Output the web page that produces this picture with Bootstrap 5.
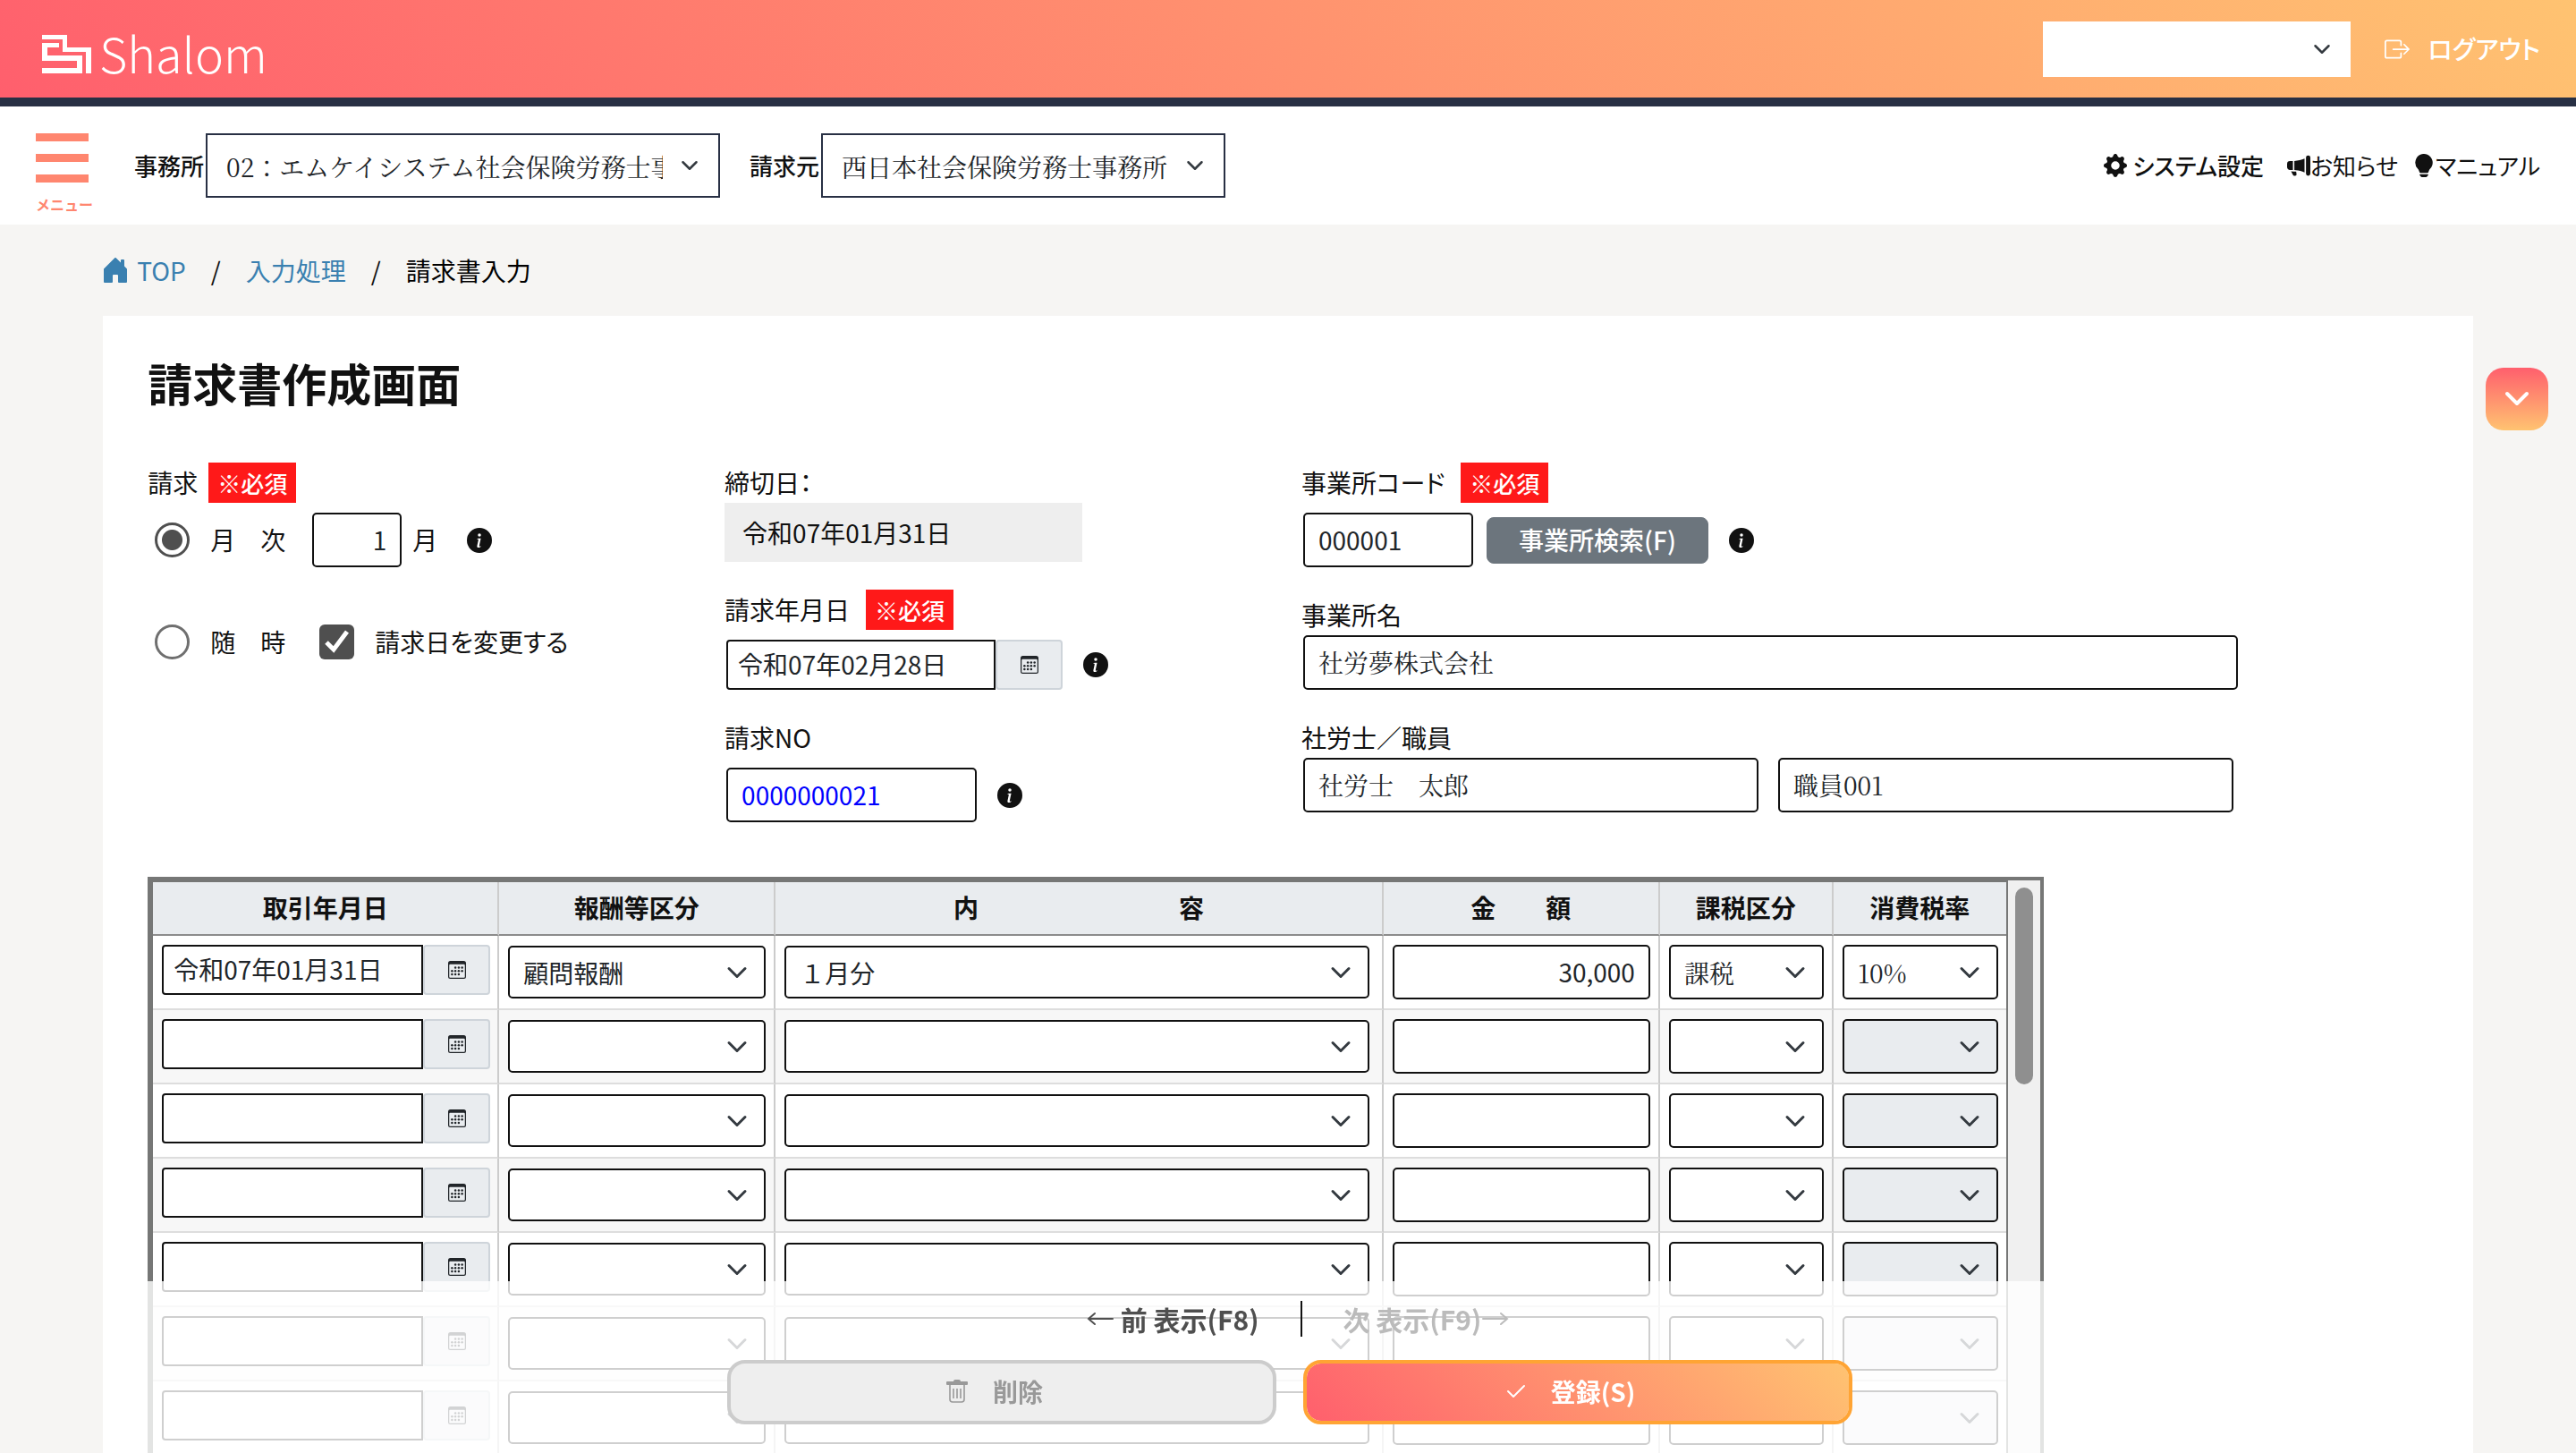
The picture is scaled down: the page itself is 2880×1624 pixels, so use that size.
<!DOCTYPE html>
<html lang="ja">
<head>
<meta charset="utf-8">
<meta name="viewport" content="width=device-width, initial-scale=1">
<title>請求書作成画面 | Shalom</title>
<link href="https://cdn.jsdelivr.net/npm/bootstrap@5.3.0/dist/css/bootstrap.min.css" rel="stylesheet">
<style>
  :root {
    --ink: #111;
    --navy: #283044;
    --coral: #ff866f;
    --chevron: url("data:image/svg+xml,%3csvg xmlns='http://www.w3.org/2000/svg' viewBox='0 0 16 16'%3e%3cpath fill='none' stroke='%23343a40' stroke-linecap='round' stroke-linejoin='round' stroke-width='2' d='m2 5 6 6 6-6'/%3e%3c/svg%3e");
    --tick: url("data:image/svg+xml,%3csvg xmlns='http://www.w3.org/2000/svg' viewBox='0 0 39 39'%3e%3cpath fill='none' stroke='%23fff' stroke-width='5' d='M8 20l8 8L31 8'/%3e%3c/svg%3e");
  }
  body {
    height: 100vh;
    overflow: hidden;
    background: #f6f5f3;
    color: var(--ink);
    font-family: "Noto Sans CJK JP", sans-serif;
    font-size: 28px;
    line-height: 45px;
    font-feature-settings: "palt";
  }
  svg { display: block; flex: none; fill: currentColor; }
  input, select, button { font-family: inherit; }
  .thin-text, .office-select { font-family: "Noto Serif CJK JP", "Noto Sans CJK JP", serif; font-weight: 400; }

  /* brand bar */
  .brand-bar {
    height: 119px;
    padding: 0 40px 0 47px;
    border-bottom: 10px solid var(--navy);
    background: linear-gradient(45deg, #ff5f6d, #ffc371) padding-box;
  }
  .brand-name { font-size: 54px; font-weight: 300; line-height: 80px; color: #fff; }
  .account-select { width: 344px; height: 62px; margin-right: 38px; border: 0; }
  .logout { color: #fff; font-size: 28px; font-weight: 500; gap: 20px; }

  /* office bar */
  .office-bar { height: 132px; padding: 30px 40px 0; }
  .menu-btn { gap: 14px; margin-right: 46px; color: var(--coral); font-size: 16px; font-weight: 700; line-height: 20px; }
  .menu-btn i { display: block; width: 59px; height: 9px; background: var(--coral); }
  .office-label { font-size: 26px; font-weight: 500; line-height: 72px; margin-right: 2px; }
  .office-select { height: 72px; padding: 2px 62px 0 21px; border: 2px solid var(--navy); }
  .office-select, .account-select {
    border-radius: 0; font-size: 28px; font-feature-settings: normal;
    background-size: 20px 20px; background-position: right 22px center;
  }
  .office-a { width: 575px; margin-right: 33px; }
  .office-b { width: 452px; }
  .util-link { font-size: 26px; line-height: 72px; color: var(--ink); text-decoration: none; }
  .util-link.main { gap: 6px; margin-right: 26px; font-weight: 500; }

  /* page */
  .page-area { padding: 0 4%; }
  .crumbs { --bs-breadcrumb-divider: "/"; --bs-breadcrumb-divider-color: #111; --bs-breadcrumb-item-padding-x: 28px; height: 102px; font-size: 28px; }
  .crumbs a { color: #3a80b0; text-decoration: none; gap: 10px; }
  .sheet { padding: 34px 50px 0; }
  .sheet-title { font-size: 50px; line-height: 80px; font-weight: 700; margin: 0 0 50px; }
  .g30 { --bs-gutter-x: 30px; }
  .field + .field { margin-top: 31px; }
  .field-head { height: 45px; gap: 12px; }
  .field-head.wide { gap: 18px; }
  .field-line { margin-top: 11px; padding-left: 2px; }
  .field-line.tight { margin-top: 0; gap: 22px; }
  .must { background: #ff1919; color: #fff; font-size: 26px; font-weight: 500; padding: 0 10px; }
  .box-input {
    height: 61px; padding: 0 15px 2px; border: 2px solid var(--ink); border-radius: 5px;
    font-size: 28px; color: #212529; background-color: #fff; font-feature-settings: normal;
  }
  .closing { width: 400px; height: 66px; padding-left: 20px; line-height: 66px; background: #eee; }
  .pick { width: 39px; height: 39px; margin: 0; border: 3px solid #6f6f6f; }
  .pick:checked { border-color: #4f4f4f; }
  .pick[type=radio]:checked {
    background-color: #fff;
    background-image: radial-gradient(circle, #4f4f4f 11px, transparent 12px);
  }
  .pick[type=checkbox] { margin-left: 38px; border: 0; border-radius: 6px; }
  .pick[type=checkbox]:checked { background-color: #4f4f4f; background-image: var(--tick); }
  .pick-line { height: 61px; }
  .pick-line + .pick-line { margin-top: 53px; }
  .pick-label { margin-left: 23px; }
  .w-month { width: 100px; margin: 0 12px 0 30px; }
  .w-date { width: 301px; }
  .w-number { width: 280px; }
  .w-code { width: 190px; }
  .w-name { width: 1045px; }
  .w-person { width: 509px; }
  .blue-text { color: #00f; }
  .info { width: 28px; height: 28px; margin-left: 23px; }
  .info.far { margin-left: 33px; }
  .date-box { height: 56px; padding: 0 11px 2px; border-radius: 4px 0 0 4px; }
  .cal-btn {
    width: 75px; height: 56px; flex: none; border: 2px solid #ced4da; border-radius: 4px;
    background: #e9ecef; color: #212529;
  }
  .search-btn { width: 248px; height: 52px; margin-left: 15px; padding: 0 0 2px; border-radius: 8px; font-size: 28px; font-weight: 500; line-height: 1; }

  /* detail lines */
  .grid-frame { margin-top: 61px; border: 4px solid #767776; }
  .grid-body { border: solid #767776; border-width: 2px 2px 0; }
  .lines { table-layout: fixed; border-collapse: separate; border-spacing: 0; }
  .lines th { height: 60px; padding: 0 0 2px; text-align: center; background: #e9ecef; border-right: 2px solid #ccc; border-bottom: 2px solid #8c8c8c; }
  .lines td { height: 83px; padding: 10px 9px 10px 10px; vertical-align: middle; border-right: 2px solid #ccc; border-bottom: 2px solid #ddd; }
  .lines tr > :last-child { border-right: 0; }
  .lines td.date-cell { vertical-align: top; padding-right: 8px; }
  .lines td.body-cell { padding-right: 14px; }
  .lines tbody tr:nth-child(even) { background: #f7f7f7; }
  .cell-select {
    height: 59px; padding: 0 50px 0 15px; border: 2px solid var(--ink); border-radius: 5px;
    font-size: 28px; color: #212529; background-color: #fff; font-feature-settings: normal;
    background-size: 24px 24px; background-position: right 18px center;
  }
  .cell-select.tall { height: 61px; }
  .form-select { --bs-form-select-bg-img: var(--chevron); background-image: var(--chevron); }
  .cell-select:disabled { background-color: #e9ecef; }
  .rail { width: 36px; padding: 8px; background: #f0f0f0; }
  .rail div { width: 20px; height: 220px; border-radius: 10px; background: #8f8f8f; }

  /* floating parts */
  .side-toggle {
    position: absolute; top: 411px; right: 31px; width: 70px; height: 70px;
    border: 0; border-radius: 20px; background: linear-gradient(#ff5f6d, #ffc371);
  }
  .action-bar { left: 4%; right: 4%; padding: 22px 50px 32px 54px; background: rgba(255, 255, 255, .8); }
  .pager { gap: 46px; padding-left: 18px; margin-bottom: 26px; font-size: 30px; line-height: 40px; font-weight: 700; }
  .pager a { color: #4f4f4f; text-decoration: none; gap: 8px; }
  .pager a.off { color: #bbb; gap: 1px; }
  .pager hr { width: 2px; height: 40px; margin: 0; border: 0; background: var(--ink); opacity: 1; }
  .act { width: 100%; height: 72px; gap: 28px; padding: 0 16px 2px 0; border: 4px solid #ccc; border-radius: 20px; background: #eee; color: #999; font-size: 28px; font-weight: 700; }
  .act.save { border-color: #ffa434; background: linear-gradient(45deg, #ff5f6d, #ffc371) padding-box; color: #fff; }
</style>
<script src="https://cdn.jsdelivr.net/npm/bootstrap@5.3.0/dist/js/bootstrap.bundle.min.js"></script>
</head>
<body>

<svg width="0" height="0" class="position-absolute" aria-hidden="true">
  <symbol id="i-info" viewBox="0 0 16 16"><path d="M8 16A8 8 0 1 0 8 0a8 8 0 0 0 0 16zm.93-9.412-1 4.705c-.07.34.029.533.304.533.194 0 .487-.07.686-.246l-.088.416c-.287.346-.92.598-1.465.598-.703 0-1.002-.422-.808-1.319l.738-3.468c.064-.293.006-.399-.287-.47l-.451-.081.082-.381 2.29-.287zM8 5.5a1 1 0 1 1 0-2 1 1 0 0 1 0 2z"/></symbol>
  <symbol id="i-cal" viewBox="0 0 16 16"><path d="M14 0H2a2 2 0 0 0-2 2v12a2 2 0 0 0 2 2h12a2 2 0 0 0 2-2V2a2 2 0 0 0-2-2zM1 3.857C1 3.384 1.448 3 2 3h12c.552 0 1 .384 1 .857v10.286c0 .473-.448.857-1 .857H2c-.552 0-1-.384-1-.857V3.857z"/><g><circle cx="6.5" cy="6" r="1"/><circle cx="9.5" cy="6" r="1"/><circle cx="12.5" cy="6" r="1"/><circle cx="3.5" cy="9" r="1"/><circle cx="6.5" cy="9" r="1"/><circle cx="9.5" cy="9" r="1"/><circle cx="12.5" cy="9" r="1"/><circle cx="3.5" cy="12" r="1"/><circle cx="6.5" cy="12" r="1"/><circle cx="9.5" cy="12" r="1"/></g></symbol>
</svg>

<header>
  <div class="brand-bar d-flex align-items-center">
    <a href="#" class="d-flex align-items-center text-decoration-none gap-2 pt-2" aria-label="Shalom">
      <svg width="56" height="43" viewBox="0 0 56 43" class="mt-1"><path fill="#fff" d="M0 0h28v14h27v29h-6V19H23V5H0zM0 9h19v5H6v9h39v20H0v-6h39v-8H0z"/></svg>
      <span class="brand-name">Shalom</span>
    </a>
    <select class="form-select account-select ms-auto" aria-label="アカウント"><option></option></select>
    <a href="#" class="logout d-flex align-items-center text-decoration-none">
      <svg width="28" height="28" viewBox="0 0 16 16"><path d="M10 12.5a.5.5 0 0 1-.5.5h-8a.5.5 0 0 1-.5-.5v-9a.5.5 0 0 1 .5-.5h8a.5.5 0 0 1 .5.5v2a.5.5 0 0 0 1 0v-2A1.5 1.5 0 0 0 9.5 2h-8A1.5 1.5 0 0 0 0 3.5v9A1.5 1.5 0 0 0 1.5 14h8a1.5 1.5 0 0 0 1.5-1.5v-2a.5.5 0 0 0-1 0v2z"/><path d="M15.854 8.354a.5.5 0 0 0 0-.708l-3-3a.5.5 0 0 0-.708.708L14.293 7.5H5.5a.5.5 0 0 0 0 1h8.793l-2.147 2.146a.5.5 0 0 0 .708.708l3-3z"/></svg>
      ログアウト
    </a>
  </div>

  <div class="office-bar d-flex align-items-start bg-white">
    <button type="button" class="menu-btn d-flex flex-column align-items-start border-0 bg-transparent p-0"><i></i><i></i><i></i><span>メニュー</span></button>
    <label class="office-label" for="office">事務所</label>
    <select id="office" class="form-select office-select office-a"><option>02：エムケイシステム社会保険労務士事務所</option></select>
    <label class="office-label" for="issuer">請求元</label>
    <select id="issuer" class="form-select office-select office-b"><option>西日本社会保険労務士事務所</option></select>
    <a href="#" class="util-link main d-flex align-items-center ms-auto"><svg width="26" height="26" viewBox="0 0 16 16"><path d="M9.405 1.05c-.413-1.4-2.397-1.4-2.81 0l-.1.34a1.464 1.464 0 0 1-2.105.872l-.31-.17c-1.283-.698-2.686.705-1.987 1.987l.169.311c.446.82.023 1.841-.872 2.105l-.34.1c-1.4.413-1.4 2.397 0 2.81l.34.1a1.464 1.464 0 0 1 .872 2.105l-.17.31c-.698 1.283.705 2.686 1.987 1.987l.311-.169a1.464 1.464 0 0 1 2.105.872l.1.34c.413 1.4 2.397 1.4 2.81 0l.1-.34a1.464 1.464 0 0 1 2.105-.872l.31.17c1.283.698 2.686-.705 1.987-1.987l-.169-.311a1.464 1.464 0 0 1 .872-2.105l.34-.1c1.4-.413 1.4-2.397 0-2.81l-.34-.1a1.464 1.464 0 0 1-.872-2.105l.17-.31c.698-1.283-.705-2.686-1.987-1.987l-.311.169a1.464 1.464 0 0 1-2.105-.872l-.1-.34zM8 10.93a2.929 2.929 0 1 1 0-5.86 2.929 2.929 0 0 1 0 5.858z"/></svg>システム設定</a>
    <a href="#" class="util-link d-flex align-items-center me-3"><svg width="26" height="26" viewBox="0 0 16 16"><path d="M13 2.5a1.5 1.5 0 0 1 3 0v11a1.5 1.5 0 0 1-3 0v-11zm-1 .724c-2.067.95-4.539 1.481-7 1.656v6.237a25.222 25.222 0 0 1 1.088.085c2.053.204 4.038.668 5.912 1.56V3.224zm-8 7.841V4.934c-.68.027-1.399.043-2.008.053A2.02 2.02 0 0 0 0 7v2c0 1.106.896 1.996 1.994 2.009a68.14 68.14 0 0 1 .496.008 64 64 0 0 1 1.51.048zm1.39 1.081c.285.021.569.047.85.078l.253 1.69a1 1 0 0 1-.983 1.187h-.548a1 1 0 0 1-.916-.599l-1.314-2.48a65.81 65.81 0 0 1 1.692.064c.327.017.65.037.966.06z"/></svg>お知らせ</a>
    <a href="#" class="util-link d-flex align-items-center"><svg width="26" height="26" viewBox="0 0 16 16"><path d="M2 6a6 6 0 1 1 10.174 4.31c-.203.196-.359.4-.453.619l-.762 1.769A.5.5 0 0 1 10.5 13h-5a.5.5 0 0 1-.46-.302l-.761-1.77a1.964 1.964 0 0 0-.453-.618A5.984 5.984 0 0 1 2 6zm3 8.5a.5.5 0 0 1 .5-.5h5a.5.5 0 0 1 0 1l-.224.447a1 1 0 0 1-.894.553H6.618a1 1 0 0 1-.894-.553L5.5 15a.5.5 0 0 1-.5-.5z"/></svg>マニュアル</a>
  </div>
</header>

<main class="page-area">
  <nav aria-label="breadcrumb">
    <ol class="breadcrumb crumbs align-items-center mb-0">
      <li class="breadcrumb-item"><a href="#" class="d-flex align-items-center"><svg width="28" height="28" viewBox="1 1 14 14"><path d="M6.5 14.5v-3.505c0-.245.25-.495.5-.495h2c.25 0 .5.25.5.5v3.5a.5.5 0 0 0 .5.5h4a.5.5 0 0 0 .5-.5v-7a.5.5 0 0 0-.146-.354L13 5.793V2.5a.5.5 0 0 0-.5-.5h-1a.5.5 0 0 0-.5.5v1.293L8.354 1.146a.5.5 0 0 0-.708 0l-6 6A.5.5 0 0 0 1.5 7.5v7a.5.5 0 0 0 .5.5h4a.5.5 0 0 0 .5-.5z"/></svg>TOP</a></li>
      <li class="breadcrumb-item"><a href="#">入力処理</a></li>
      <li class="breadcrumb-item text-black" aria-current="page">請求書入力</li>
    </ol>
  </nav>

  <form class="sheet bg-white">
    <h1 class="sheet-title">請求書作成画面</h1>

    <div class="row g30">
      <div class="col-3">
        <div class="field-head d-flex align-items-center"><span>請求</span><span class="must">※必須</span></div>
        <div class="pick-line field-line d-flex align-items-center ps-2">
          <input class="form-check-input pick" type="radio" name="kind" id="monthly" checked>
          <label class="pick-label" for="monthly">月　次</label>
          <input class="box-input w-month text-end" type="text" id="month" value="1">
          <label for="month">月</label>
          <svg class="info far"><use href="#i-info"/></svg>
        </div>
        <div class="pick-line d-flex align-items-center ps-2">
          <input class="form-check-input pick" type="radio" name="kind" id="anytime">
          <label class="pick-label" for="anytime">随　時</label>
          <input class="form-check-input pick" type="checkbox" id="changeDate" checked>
          <label class="pick-label" for="changeDate">請求日を変更する</label>
        </div>
      </div>

      <div class="col-3">
        <div class="field">
          <div class="field-head d-flex align-items-end">締切日：</div>
          <div class="closing">令和07年01月31日</div>
        </div>
        <div class="field">
          <div class="field-head wide d-flex align-items-center"><label for="billDate">請求年月日</label><span class="must">※必須</span></div>
          <div class="field-line d-flex align-items-center">
            <input class="box-input date-box w-date" id="billDate" type="text" value="令和07年02月28日">
            <button type="button" class="cal-btn d-flex align-items-center justify-content-center" aria-label="カレンダー"><svg width="20" height="20"><use href="#i-cal"/></svg></button>
            <svg class="info"><use href="#i-info"/></svg>
          </div>
        </div>
        <div class="field">
          <div class="field-head d-flex align-items-center"><label for="billNo">請求NO</label></div>
          <div class="field-line d-flex align-items-center">
            <input class="box-input w-number blue-text" id="billNo" type="text" value="0000000021">
            <svg class="info"><use href="#i-info"/></svg>
          </div>
        </div>
      </div>

      <div class="col-6">
        <div class="field">
          <div class="field-head wide d-flex align-items-center"><label for="code">事業所コード</label><span class="must">※必須</span></div>
          <div class="field-line d-flex align-items-center">
            <input class="box-input w-code" id="code" type="text" value="000001">
            <button type="button" class="btn btn-secondary search-btn">事業所検索(F)</button>
            <svg class="info"><use href="#i-info"/></svg>
          </div>
        </div>
        <div class="field">
          <div class="field-head d-flex align-items-center"><label for="officeName">事業所名</label></div>
          <div class="field-line tight d-flex"><input class="box-input w-name thin-text" id="officeName" type="text" value="社労夢株式会社"></div>
        </div>
        <div class="field">
          <div class="field-head d-flex align-items-center"><label for="agent">社労士／職員</label></div>
          <div class="field-line tight d-flex">
            <input class="box-input w-person thin-text" id="agent" type="text" value="社労士　太郎">
            <input class="box-input w-person thin-text" aria-label="職員" type="text" value="職員001">
          </div>
        </div>
      </div>
    </div>

    <div class="row g30">
      <div class="col-10">
        <div class="grid-frame d-flex">
          <div class="grid-body flex-grow-1">
            <table class="lines w-100">
              <colgroup><col style="width:387px"><col style="width:309px"><col><col style="width:309px"><col style="width:194px"><col style="width:193px"></colgroup>
              <thead><tr><th>取引年月日</th><th>報酬等区分</th><th>内　　　　　　　　容</th><th>金　　額</th><th>課税区分</th><th>消費税率</th></tr></thead>
              <tbody id="lineRows"></tbody>
            </table>
          </div>
          <div class="rail"><div></div></div>
        </div>
      </div>
    </div>
  </form>
</main>

<button type="button" class="side-toggle d-flex align-items-center justify-content-center p-0" aria-label="開く">
  <svg width="28" height="18" viewBox="0 0 28 18"><path d="M3 3l11 11L25 3" fill="none" stroke="#fff" stroke-width="4" stroke-linecap="round" stroke-linejoin="round"/></svg>
</button>

<footer class="action-bar fixed-bottom">
  <div class="pager d-flex align-items-center justify-content-center">
    <a href="#" class="d-flex align-items-center"><svg width="30" height="20" viewBox="0 0 30 20"><path d="M29 10H2M9 4 2 10l7 6" fill="none" stroke="currentColor" stroke-width="2" stroke-linecap="round"/></svg>前 表示(F8)</a>
    <hr>
    <a href="#" class="off d-flex align-items-center">次 表示(F9)<svg width="30" height="20" viewBox="0 0 30 20"><path d="M1 10h27M21 4l7 6-7 6" fill="none" stroke="currentColor" stroke-width="2" stroke-linecap="round"/></svg></a>
  </div>
  <div class="row g30 justify-content-center">
    <div class="col-3"><button type="button" class="act d-flex align-items-center justify-content-center"><svg width="24" height="26" viewBox="0 0 24 26"><path d="M1 2h7a2 2 0 0 1 2-2h4a2 2 0 0 1 2 2h7a1 1 0 0 1 1 1v2a1 1 0 0 1-1 1H1a1 1 0 0 1-1-1V3a1 1 0 0 1 1-1z"/><path d="M4 6v16a3 3 0 0 0 3 3h10a3 3 0 0 0 3-3V6M8 10v11M12 10v11M16 10v11" fill="none" stroke="currentColor" stroke-width="1.6"/></svg>削除</button></div>
    <div class="col-3"><button type="button" class="act save d-flex align-items-center justify-content-center"><svg width="22" height="16" viewBox="0 0 22 16"><path d="M2 8l6 6L20 2" fill="none" stroke="#fff" stroke-width="2" stroke-linecap="round" stroke-linejoin="round"/></svg>登録(S)</button></div>
  </div>
</footer>

<script>
  const lines = [{ date: "令和07年01月31日", kind: "顧問報酬", body: "１月分", amount: "30,000", tax: "課税", rate: "10%" }];
  while (lines.length < 8) lines.push({ date: "", kind: "", body: "", amount: "", tax: "", rate: "" });
  document.getElementById("lineRows").innerHTML = lines.map((r, i) => `
    <tr>
      <td class="date-cell"><div class="d-flex">
        <input class="box-input date-box flex-grow-1" size="1" type="text" aria-label="取引年月日 ${i + 1}" value="${r.date}">
        <button type="button" class="cal-btn d-flex align-items-center justify-content-center" aria-label="カレンダー"><svg width="20" height="20"><use href="#i-cal"/></svg></button>
      </div></td>
      <td><select class="form-select cell-select" aria-label="報酬等区分 ${i + 1}"><option>${r.kind}</option></select></td>
      <td class="body-cell"><select class="form-select cell-select" aria-label="内容 ${i + 1}"><option>${r.body}</option></select></td>
      <td><input class="box-input d-block w-100 text-end" type="text" aria-label="金額 ${i + 1}" value="${r.amount}"></td>
      <td><select class="form-select cell-select tall thin-text" aria-label="課税区分 ${i + 1}"><option>${r.tax}</option></select></td>
      <td><select class="form-select cell-select tall thin-text" aria-label="消費税率 ${i + 1}" ${i ? "disabled" : ""}><option>${r.rate}</option></select></td>
    </tr>`).join("");
</script>
</body>
</html>
